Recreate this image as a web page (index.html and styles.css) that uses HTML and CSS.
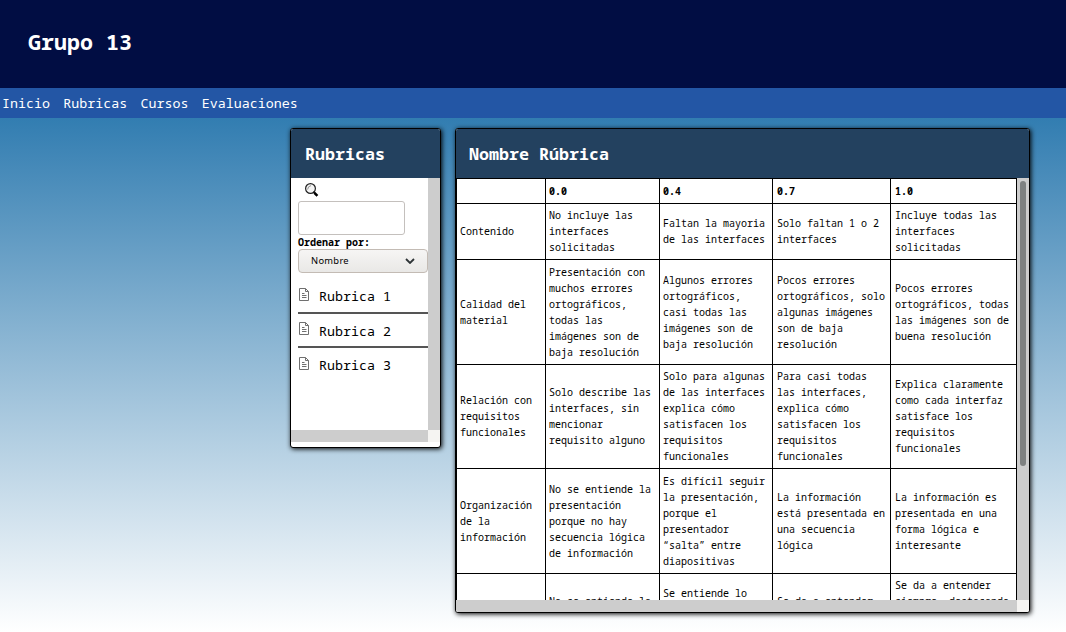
FILE: index.html
```html
<!DOCTYPE html>
<html lang="es">
<head>
<meta charset="utf-8">
<title>Grupo 13</title>
<link rel="stylesheet" href="styles.css">
</head>
<body>
<header class="banner"><h1>Grupo 13</h1></header>
<nav class="menu"><a>Inicio</a><a>Rubricas</a><a>Cursos</a><a>Evaluaciones</a></nav>
<main class="content">
  <section class="panel sidebar">
    <h2>Rubricas</h2>
    <div class="scroll-grid">
      <div class="view side-view">
        <svg class="search-icon" width="14" height="15" viewBox="0 0 14 15"><circle cx="5.5" cy="5.5" r="4.9" fill="#f4f4f4" stroke="#222" stroke-width="1.2"/><path d="M2.6 6.5Q2.8 3.2 6 2.6" fill="none" stroke="#888" stroke-width=".9"/><path d="M8.3 8.8L10 10.4" stroke="#111" stroke-width="1.6"/><path d="M9.4 9.8L12.4 12.8" stroke="#000" stroke-width="2.6"/></svg>
        <input class="search" type="text" aria-label="Buscar">
        <label class="order">Ordenar por:</label>
        <div class="select"><span>Nombre</span><svg width="10" height="6" viewBox="0 0 10 6"><path d="M1 1L5 5L9 1" fill="none" stroke="#2e3436" stroke-width="1.8"/></svg></div>
        <ul class="list">
          <li><svg class="doc" width="11" height="13" viewBox="0 0 11 13"><path d="M.5 .5H6.5L9.5 3.5V12.5H.5ZM6.5 .5V3.5H9.5M3 5.5H5.5M3 7.5H7.5M3 9.5H7.5" fill="none" stroke="#707070"/></svg><span>Rubrica 1</span></li>
          <li><svg class="doc" width="11" height="13" viewBox="0 0 11 13"><path d="M.5 .5H6.5L9.5 3.5V12.5H.5ZM6.5 .5V3.5H9.5M3 5.5H5.5M3 7.5H7.5M3 9.5H7.5" fill="none" stroke="#707070"/></svg><span>Rubrica 2</span></li>
          <li><svg class="doc" width="11" height="13" viewBox="0 0 11 13"><path d="M.5 .5H6.5L9.5 3.5V12.5H.5ZM6.5 .5V3.5H9.5M3 5.5H5.5M3 7.5H7.5M3 9.5H7.5" fill="none" stroke="#707070"/></svg><span>Rubrica 3</span></li>
        </ul>
      </div>
      <div class="bar"></div><div class="bar"></div><div class="corner"></div>
    </div>
  </section>
  <section class="panel detail">
    <h2>Nombre Rúbrica</h2>
    <div class="scroll-grid">
      <div class="view">
        <table class="rubric">
          <colgroup><col class="c1"><col class="c2"><col class="c3"><col class="c4"><col class="c5"></colgroup>
          <tr class="r1"><th></th><th>0.0</th><th>0.4</th><th>0.7</th><th>1.0</th></tr>
          <tr class="r2"><td>Contenido</td><td>No incluye las<br>interfaces<br>solicitadas</td><td>Faltan la mayoria<br>de las interfaces</td><td>Solo faltan 1 o 2<br>interfaces</td><td>Incluye todas las<br>interfaces<br>solicitadas</td></tr>
          <tr class="r3"><td>Calidad del<br>material</td><td>Presentación con<br>muchos errores<br>ortográficos,<br>todas las<br>imágenes son de<br>baja resolución</td><td>Algunos errores<br>ortográficos,<br>casi todas las<br>imágenes son de<br>baja resolución</td><td>Pocos errores<br>ortográficos, solo<br>algunas imágenes<br>son de baja<br>resolución</td><td>Pocos errores<br>ortográficos, todas<br>las imágenes son de<br>buena resolución</td></tr>
          <tr class="r4"><td>Relación con<br>requisitos<br>funcionales</td><td>Solo describe las<br>interfaces, sin<br>mencionar<br>requisito alguno</td><td>Solo para algunas<br>de las interfaces<br>explica cómo<br>satisfacen los<br>requisitos<br>funcionales</td><td>Para casi todas<br>las interfaces,<br>explica cómo<br>satisfacen los<br>requisitos<br>funcionales</td><td>Explica claramente<br>como cada interfaz<br>satisface los<br>requisitos<br>funcionales</td></tr>
          <tr class="r5"><td>Organización<br>de la<br>información</td><td>No se entiende la<br>presentación<br>porque no hay<br>secuencia lógica<br>de información</td><td>Es difícil seguir<br>la presentación,<br>porque el<br>presentador<br>“salta” entre<br>diapositivas</td><td>La información<br>está presentada en<br>una secuencia<br>lógica</td><td>La información es<br>presentada en una<br>forma lógica e<br>interesante</td></tr>
          <tr class="r6"><td></td><td class="low">No se entiende la</td><td class="mid">Se entiende lo</td><td class="low">Se da a entender</td><td>Se da a entender<br>siempre, destacando</td></tr>
        </table>
      </div>
      <div class="bar"><div class="thumb"></div></div><div class="bar"></div><div class="corner"></div>
    </div>
  </section>
</main>
</body>
</html>
```
FILE: styles.css
```css
* { box-sizing: border-box; }
body {
  margin: 0;
  height: 632px;
  overflow: hidden;
  display: flex;
  flex-direction: column;
  font-family: "Noto Sans Mono", "DejaVu Sans Mono", monospace;
  font-size: 10px;
  line-height: 16px;
  color: #000;
}
.banner { height: 88px; background: #010d43; color: #fff; padding: 27px 0 0 28px; }
.banner h1 { margin: 0; font-size: 21.67px; line-height: 30px; }
.menu {
  height: 30px;
  background: #2356a5;
  color: #fff;
  display: flex;
  align-items: center;
  gap: 13.3px;
  padding-left: 2px;
  font-size: 13.33px;
}
.content {
  flex: 1;
  display: flex;
  align-items: flex-start;
  gap: 14px;
  padding: 10px 0 0 290px;
  background: linear-gradient(#327db1, #fff);
}
.panel {
  display: flex;
  flex-direction: column;
  border: 1px solid #000;
  border-radius: 3px;
  background: #fff;
  box-shadow: 1px 1px 5px #000;
  overflow: hidden;
}
.sidebar { width: 151px; height: 320px; }
.detail { width: 575px; height: 485px; }
.panel h2 {
  margin: 0;
  flex: none;
  height: 49px;
  padding-left: 14px;
  background: #23415f;
  color: #fff;
  font-size: 16.67px;
  line-height: 50px;
}
.detail h2 { padding-left: 13px; }
.scroll-grid { display: grid; grid-template-rows: 252px 12px; grid-template-columns: 137px 12px; }
.detail .scroll-grid { grid-template-rows: 422px 12px; grid-template-columns: 561px 12px; }
.view { overflow: hidden; }
.bar { background: #cdcdcd; }
.corner { background: #f5f4f2; }
.thumb { width: 6px; height: 285px; margin: 3px 0 0 3px; border-radius: 3px; background: #7e8181; }
.side-view { padding: 5px 0 0 7px; }
.search-icon { display: block; margin-left: 7px; }
.search {
  display: block;
  width: 107px;
  height: 34px;
  margin-top: 3px;
  border: 1px solid #c4c0bd;
  border-radius: 3px;
  background: #fff;
}
.order { display: block; height: 14px; line-height: 15px; font-weight: bold; }
.select {
  display: flex;
  align-items: center;
  justify-content: space-between;
  height: 24px;
  padding: 0 12px;
  border: 1px solid #c3bbb4;
  border-radius: 4px;
  background: linear-gradient(#f6f5f4, #e9e8e6);
  font-family: "Noto Sans", sans-serif;
  font-size: 9.33px;
  letter-spacing: .3px;
}
.list { margin: 7px 0 0; padding: 0; list-style: none; font-size: 13.33px; }
.list li { display: flex; height: 34px; padding: 8px 0 0 1px; gap: 9px; }
.list li:first-child { height: 32px; }
.list li + li { border-top: 2px solid #555; }
.list li:nth-child(3) { padding-top: 9px; }
.list span { line-height: 16px; }
.list li:nth-child(2) span { margin-top: 1px; }
.doc { flex: none; }
.rubric { width: 561px; table-layout: fixed; border-spacing: 0; border-left: 1px solid #000; border-top: 1px solid #000; }
.c1 { width: 89px; }
.c2 { width: 114px; }
.c3 { width: 113px; }
.c4 { width: 118px; }
.c5 { width: 126px; }
.rubric th, .rubric td {
  padding: 0 0 0 3px;
  border-right: 1px solid #000;
  border-bottom: 1px solid #000;
  text-align: left;
  white-space: nowrap;
}
.rubric th:nth-child(n+4), .rubric td:nth-child(n+4) { padding-left: 4px; }
.r1 { height: 25px; }
.r2 { height: 56px; }
.r3 { height: 105px; }
.r4 { height: 104px; }
.r5 { height: 105px; }
.r6 { height: 80px; }
.rubric .r2 td, .rubric .r4 td { padding-bottom: 2px; }
.rubric .r6 td { vertical-align: top; padding-top: 3px; }
.rubric .r6 .mid { padding-top: 11px; }
.rubric .r6 .low { padding-top: 19px; }
```
